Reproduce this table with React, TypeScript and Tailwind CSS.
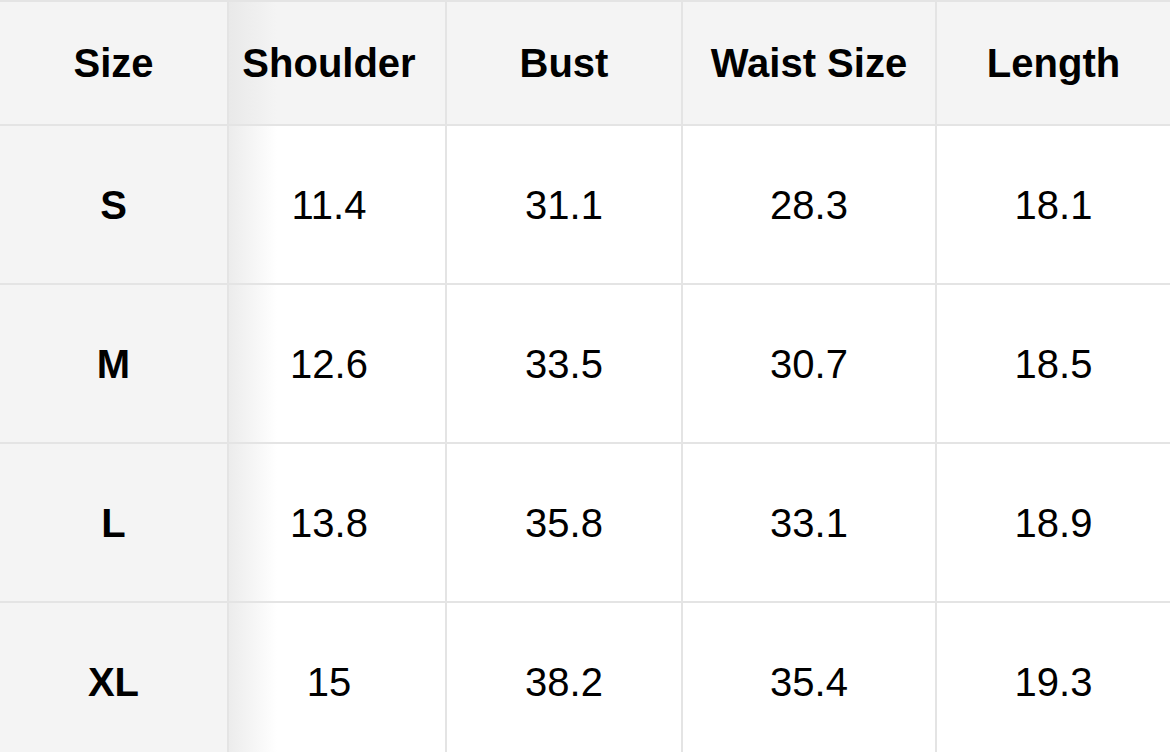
import React from "react";

const headers = ["Size", "Shoulder", "Bust", "Waist Size", "Length"];
const rows = [
  ["S", "11.4", "31.1", "28.3", "18.1"],
  ["M", "12.6", "33.5", "30.7", "18.5"],
  ["L", "13.8", "35.8", "33.1", "18.9"],
  ["XL", "15", "38.2", "35.4", "19.3"],
];

function Cell({ col, header, text }: { col: number; header?: boolean; text: string }) {
  let bg = "bg-white";
  if (header) {
    bg = col === 1 ? "bg-[linear-gradient(to_right,#e9e9e9,#f4f4f4_48px)]" : "bg-[#f4f4f4]";
  } else if (col === 0) {
    bg = "bg-[#f4f4f4]";
  } else if (col === 1) {
    bg = "bg-[linear-gradient(to_right,#ececec,#ffffff_48px)]";
  }
  const weight = header || col === 0 ? "font-bold" : "font-normal";
  const pad = col === 1 ? "pr-[16px]" : "";
  return (
    <div className={`flex items-center justify-center ${bg} ${pad}`}>
      <span className={`text-[40px] leading-none text-black ${weight}`}>{text}</span>
    </div>
  );
}

export default function App() {
  return (
    <div
      className="w-[1170px] h-[752px] overflow-hidden bg-[#e4e4e4] pt-[2px]"
      style={{ fontFamily: '"Liberation Sans", Arial, Helvetica, sans-serif' }}
    >
      <div className="grid grid-cols-[227px_216px_234px_252px_1fr] grid-rows-[122px_157px_157px_157px_157px] gap-[2px]">
        {headers.map((h, i) => (
          <Cell key={h} col={i} header text={h} />
        ))}
        {rows.map((r) =>
          r.map((v, i) => <Cell key={r[0] + i} col={i} text={v} />)
        )}
      </div>
    </div>
  );
}
